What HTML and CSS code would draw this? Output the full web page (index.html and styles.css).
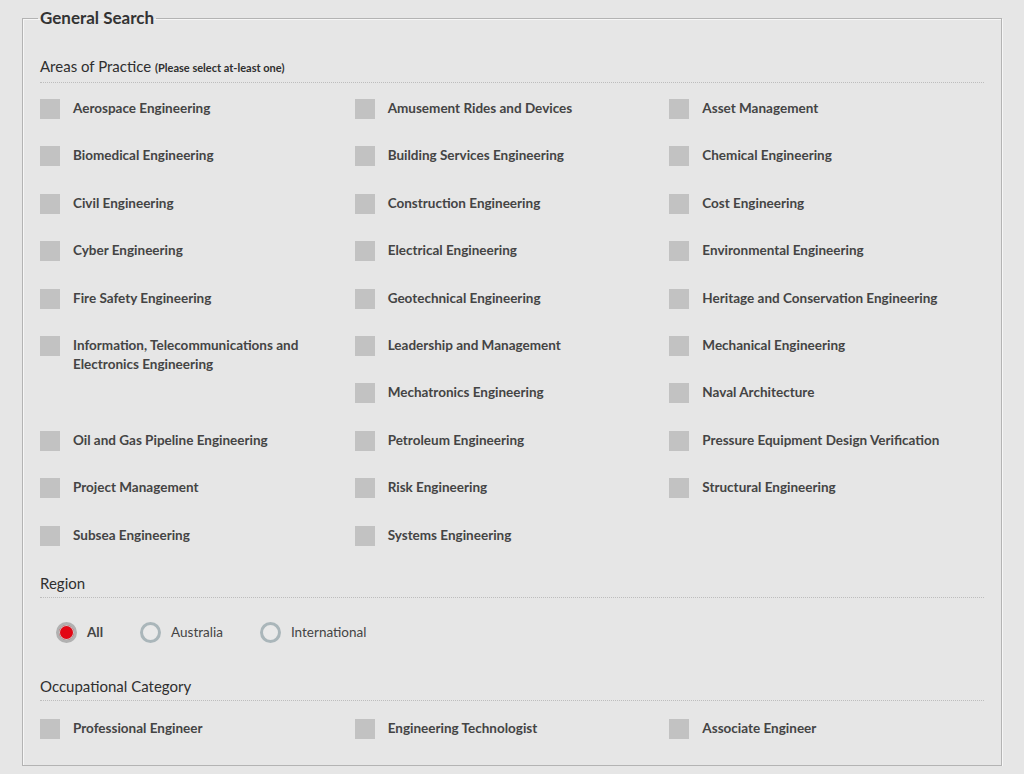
FILE: index.html
```html
<!DOCTYPE html>
<html lang="en">
<head>
<meta charset="utf-8">
<title>General Search</title>
<link rel="stylesheet" href="styles.css">
</head>
<body>
<div class="page">
  <fieldset class="search">
    <legend class="search-title">General Search</legend>

    <h3 class="section-head">Areas of Practice <small>(Please select at-least one)</small></h3>
    <div class="check-grid">
      <label class="check"><span class="box"></span><span class="lbl">Aerospace Engineering</span></label>
      <label class="check"><span class="box"></span><span class="lbl">Amusement Rides and Devices</span></label>
      <label class="check"><span class="box"></span><span class="lbl">Asset Management</span></label>
      <label class="check"><span class="box"></span><span class="lbl">Biomedical Engineering</span></label>
      <label class="check"><span class="box"></span><span class="lbl">Building Services Engineering</span></label>
      <label class="check"><span class="box"></span><span class="lbl">Chemical Engineering</span></label>
      <label class="check"><span class="box"></span><span class="lbl">Civil Engineering</span></label>
      <label class="check"><span class="box"></span><span class="lbl">Construction Engineering</span></label>
      <label class="check"><span class="box"></span><span class="lbl">Cost Engineering</span></label>
      <label class="check"><span class="box"></span><span class="lbl">Cyber Engineering</span></label>
      <label class="check"><span class="box"></span><span class="lbl">Electrical Engineering</span></label>
      <label class="check"><span class="box"></span><span class="lbl">Environmental Engineering</span></label>
      <label class="check"><span class="box"></span><span class="lbl">Fire Safety Engineering</span></label>
      <label class="check"><span class="box"></span><span class="lbl">Geotechnical Engineering</span></label>
      <label class="check"><span class="box"></span><span class="lbl">Heritage and Conservation Engineering</span></label>
      <label class="check tall"><span class="box"></span><span class="lbl">Information, Telecommunications and Electronics Engineering</span></label>
      <label class="check"><span class="box"></span><span class="lbl">Leadership and Management</span></label>
      <label class="check"><span class="box"></span><span class="lbl">Mechanical Engineering</span></label>
      <label class="check"><span class="box"></span><span class="lbl">Mechatronics Engineering</span></label>
      <label class="check"><span class="box"></span><span class="lbl">Naval Architecture</span></label>
      <label class="check"><span class="box"></span><span class="lbl">Oil and Gas Pipeline Engineering</span></label>
      <label class="check"><span class="box"></span><span class="lbl">Petroleum Engineering</span></label>
      <label class="check"><span class="box"></span><span class="lbl">Pressure Equipment Design Verification</span></label>
      <label class="check"><span class="box"></span><span class="lbl">Project Management</span></label>
      <label class="check"><span class="box"></span><span class="lbl">Risk Engineering</span></label>
      <label class="check"><span class="box"></span><span class="lbl">Structural Engineering</span></label>
      <label class="check"><span class="box"></span><span class="lbl">Subsea Engineering</span></label>
      <label class="check"><span class="box"></span><span class="lbl">Systems Engineering</span></label>
    </div>

    <h3 class="section-head">Region</h3>
    <div class="radio-row">
      <label class="radio selected"><span class="ring"></span><span class="rlbl">All</span></label>
      <label class="radio"><span class="ring"></span><span class="rlbl">Australia</span></label>
      <label class="radio"><span class="ring"></span><span class="rlbl">International</span></label>
    </div>

    <h3 class="section-head">Occupational Category</h3>
    <div class="check-grid check-grid-last">
      <label class="check"><span class="box"></span><span class="lbl">Professional Engineer</span></label>
      <label class="check"><span class="box"></span><span class="lbl">Engineering Technologist</span></label>
      <label class="check"><span class="box"></span><span class="lbl">Associate Engineer</span></label>
    </div>
  </fieldset>
</div>
</body>
</html>
```

FILE: styles.css
```css
html, body {
  margin: 0;
  padding: 0;
  background: #e6e6e6;
}

body {
  font-family: Lato, "Open Sans", "Liberation Sans", sans-serif;
  color: #444;
}

.page {
  padding: 7px 22px 0 22px;
}

.search {
  margin: 0;
  padding: 27px 17px 26px 17px;
  border: 1px solid #b3b3b3;
  box-shadow: 1px 1px 0 #f6f6f6, inset 1px 1px 0 #f6f6f6;
  min-width: 0;
}

.search-title {
  font-size: 17px;
  font-weight: 700;
  line-height: 22px;
  color: #333;
  padding: 0 2px;
  margin-left: -2px;
}

.section-head {
  margin: 0;
  font-size: 15px;
  font-weight: 400;
  line-height: 20px;
  color: #2f2f2f;
  padding-bottom: 4px;
  border-bottom: 1px dotted #bdbdbd;
}

.section-head small {
  font-size: 11px;
  font-weight: 700;
}

.check-grid {
  display: grid;
  grid-template-columns: repeat(3, 1fr);
  grid-auto-rows: 20px;
  row-gap: 27.4px;
  margin-top: 16px;
  margin-bottom: 27px;
}

.check-grid-last {
  margin-top: 18px;
  margin-bottom: 0;
}

.check {
  display: flex;
  align-items: flex-start;
}

.check.tall {
  grid-row: span 2;
}

.box {
  flex: none;
  width: 20px;
  height: 20px;
  background: #c2c2c2;
  margin-right: 13px;
}

.lbl {
  font-size: 13.5px;
  font-weight: 700;
  line-height: 19.5px;
  color: #444;
  padding-right: 12px;
}

.radio-row {
  display: flex;
  align-items: center;
  gap: 37px;
  padding-left: 16px;
  margin-top: 24px;
  margin-bottom: 33px;
}

.radio {
  display: flex;
  align-items: center;
}

.ring {
  width: 15px;
  height: 15px;
  border: 3px solid #aab6ba;
  border-radius: 50%;
  background: #e9e9e9;
  margin-right: 10px;
}

.radio.selected .ring {
  border-color: #b1b1b1;
  background: #e30613;
  box-shadow: inset 0 0 0 1px #c9c9c9;
}

.rlbl {
  font-size: 13.5px;
  line-height: 20px;
  color: #444;
}

.radio.selected .rlbl {
  font-weight: 700;
}
```
